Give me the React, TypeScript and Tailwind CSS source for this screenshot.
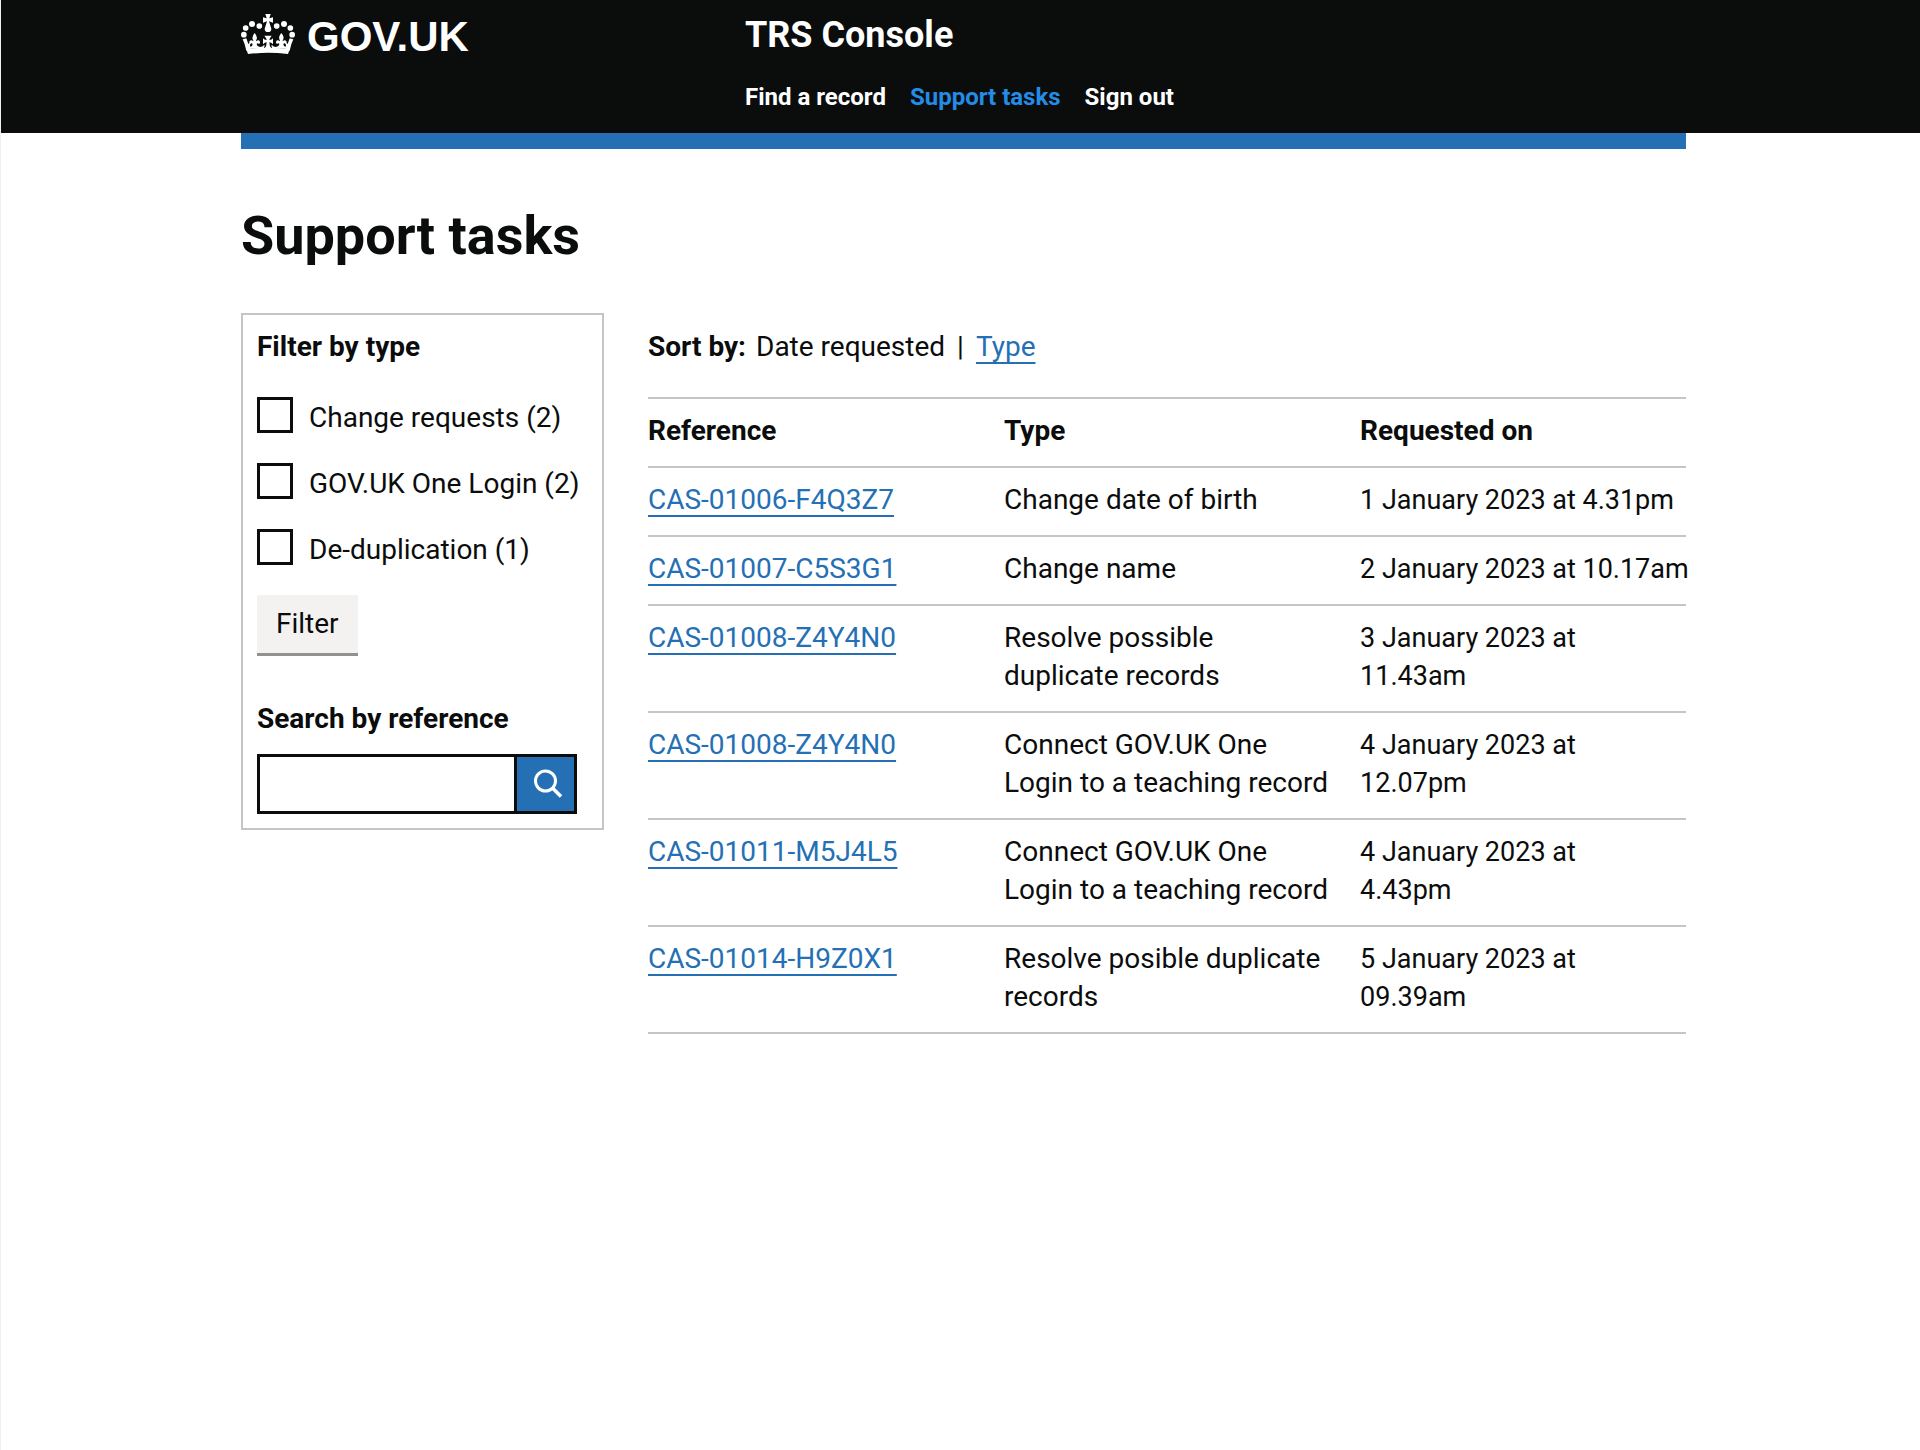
type Task = { reference: string; type: string[]; requestedOn: string[] }

const tasks: Task[] = [
  { reference: 'CAS-01006-F4Q3Z7', type: ['Change date of birth'], requestedOn: ['1 January 2023 at 4.31pm'] },
  { reference: 'CAS-01007-C5S3G1', type: ['Change name'], requestedOn: ['2 January 2023 at 10.17am'] },
  { reference: 'CAS-01008-Z4Y4N0', type: ['Resolve possible', 'duplicate records'], requestedOn: ['3 January 2023 at', '11.43am'] },
  { reference: 'CAS-01008-Z4Y4N0', type: ['Connect GOV.UK One', 'Login to a teaching record'], requestedOn: ['4 January 2023 at', '12.07pm'] },
  { reference: 'CAS-01011-M5J4L5', type: ['Connect GOV.UK One', 'Login to a teaching record'], requestedOn: ['4 January 2023 at', '4.43pm'] },
  { reference: 'CAS-01014-H9Z0X1', type: ['Resolve posible duplicate', 'records'], requestedOn: ['5 January 2023 at', '09.39am'] },
]

const filters = [
  { id: 'change-requests', label: 'Change requests (2)' },
  { id: 'one-login', label: 'GOV.UK One Login (2)' },
  { id: 'de-duplication', label: 'De-duplication (1)' },
]

const linkClass = 'text-[#2570b4] underline decoration-2 underline-offset-[6px] [text-decoration-skip-ink:none]'

function Crown() {
  return (
    <svg viewBox="0 0 162 120" className="h-10 w-[54px] shrink-0" fill="currentColor" aria-hidden="true">
      <circle cx="8.5" cy="62" r="8.5" />
      <circle cx="14" cy="42" r="8.5" />
      <circle cx="33" cy="30" r="9" />
      <circle cx="55" cy="36" r="8.5" />
      <circle cx="107" cy="36" r="8.5" />
      <circle cx="129" cy="30" r="9" />
      <circle cx="148" cy="42" r="8.5" />
      <circle cx="153.5" cy="62" r="8.5" />
      {/* orb cross and pendant pearl */}
      <path d="M73 0H89L85 13L96 10V26L84 22L91 44A10 10 0 1 1 71 44L78 22L66 26V10L77 13Z" />
      {/* band */}
      <path d="M21 120Q81 113 141 120L146 106Q114 101 81 101Q48 101 16 106Z" />
      {/* outer leaves */}
      <path d="M5 76L16 73L22 90L28 85L27 98L31 108L16 110Q12 90 5 76Z" />
      <path d="M157 76L146 73L140 90L134 85L135 98L131 108L146 110Q150 90 157 76Z" />
      {/* side fleurs */}
      <path d="M41 57Q50 67 47 76Q44 81 45 82Q53 75 57 83Q58 87 54 90Q48 85 47 91Q48 97 57 99Q65 99 70 92Q72 99 67 104H23L26 98Q34 98 35 92Q33 85 28 90Q23 87 26 81Q31 76 37 82Q38 80 35 76Q32 67 41 57Z" />
      <path d="M121 57Q112 67 115 76Q118 81 117 82Q109 75 105 83Q104 87 108 90Q114 85 115 91Q114 97 105 99Q97 99 92 92Q90 99 95 104H139L136 98Q128 98 127 92Q129 85 134 90Q139 87 136 81Q131 76 125 82Q124 80 127 76Q130 67 121 57Z" />
      {/* centre cross */}
      <path d="M70 65H92Q86 72 85 78Q91 79 96 73V91Q91 85 85 85Q85 98 91 103H71Q77 98 77 85Q71 85 66 91V73Q71 79 77 78Q76 72 70 65Z" />
    </svg>
  )
}

function Lines({ text }: { text: string[] }) {
  return (
    <>
      {text.map((line) => (
        <span key={line} className="block whitespace-nowrap">{line}</span>
      ))}
    </>
  )
}

function Header() {
  return (
    <header className="bg-[#0b0c0c] pl-[6px] text-white">
      <div className="mx-auto grid max-w-[1445px] grid-cols-[504px_1fr] pt-[11px] pb-[21px]">
        <a href="#home" className="flex items-start gap-3 self-start pt-[3px]">
          <Crown />
          <span className="font-['Liberation_Sans',sans-serif] text-[42px] leading-[46px] font-bold">GOV.UK</span>
        </a>
        <div>
          <a href="#console" className="text-4xl leading-[48px] font-bold">TRS Console</a>
          <nav className="mt-[23px] flex gap-6 text-2xl leading-[30px] font-bold">
            <a href="#find">Find a record</a>
            <a href="#tasks" aria-current="page" className="text-[#238ce6]">Support tasks</a>
            <a href="#sign-out">Sign out</a>
          </nav>
        </div>
      </div>
    </header>
  )
}

function FilterPanel() {
  return (
    <aside className="self-start border-2 border-[#c3c5c7] px-[14px] pt-[13px] pb-[14px]">
      <form onSubmit={(e) => e.preventDefault()}>
        <fieldset>
          <legend className="font-bold">Filter by type</legend>
          <div className="mt-[31px] flex flex-col gap-[30px]">
            {filters.map((f) => (
              <div key={f.id} className="flex h-9 items-start gap-4">
                <input
                  id={f.id}
                  type="checkbox"
                  className="size-9 shrink-0 appearance-none border-3 border-[#0b0c0c] bg-white checked:bg-[#0b0c0c]"
                />
                <label htmlFor={f.id} className="pt-0.5 whitespace-nowrap">{f.label}</label>
              </div>
            ))}
          </div>
        </fieldset>
        <button type="submit" className="mt-[30px] h-[61px] border-b-3 border-[#929191] bg-[#f3f2f1] px-[19px]">Filter</button>
      </form>
      <form onSubmit={(e) => e.preventDefault()} className="mt-11">
        <label htmlFor="reference" className="block font-bold">Search by reference</label>
        <div className="mt-4 flex h-[60px] w-[320px] max-w-full border-3 border-[#0b0c0c]">
          <input id="reference" type="text" className="min-w-0 flex-1 border-r-3 border-[#0b0c0c] px-2 outline-none" />
          <button type="submit" aria-label="Search" className="flex w-[57px] items-center justify-center bg-[#2570b4] pl-1 text-white">
            <svg viewBox="0 0 30 30" className="size-[30px]" fill="none" stroke="currentColor" strokeWidth="3" aria-hidden="true">
              <circle cx="12.5" cy="12" r="10" />
              <path d="M19.5 19L28 27.5" strokeWidth="3.6" />
            </svg>
          </button>
        </div>
      </form>
    </aside>
  )
}

function TaskTable() {
  return (
    <table className="mt-[31px] w-full table-fixed border-collapse text-left">
      <thead>
        <tr className="border-y-2 border-[#c3c5c7]">
          <th scope="col" className="w-[34.3%] pt-[13px] pb-4 font-bold">Reference</th>
          <th scope="col" className="w-[34.3%] pt-[13px] pb-4 font-bold">Type</th>
          <th scope="col" className="pt-[13px] pb-4 font-bold">Requested on</th>
        </tr>
      </thead>
      <tbody>
        {tasks.map((task, i) => (
          <tr key={i} className="border-b-2 border-[#c3c5c7] align-top">
            <td className="pt-[13px] pb-4"><a href={`#${task.reference}`} className={linkClass}>{task.reference}</a></td>
            <td className="pt-[13px] pb-4"><Lines text={task.type} /></td>
            <td className="pt-[13px] pb-4 text-[27px]"><Lines text={task.requestedOn} /></td>
          </tr>
        ))}
      </tbody>
    </table>
  )
}

export default function App() {
  return (
    <div className="min-h-screen border-l border-[#f0f0f0] bg-white font-['Roboto',sans-serif] text-[28px] leading-[38px] text-[#0b0c0c]">
      <Header />
      <div className="pl-[6px]">
        <div className="mx-auto max-w-[1445px]">
          <div className="h-4 bg-[#2570b4]" />
          <main className="pt-[57px]">
            <h1 className="text-[54px] leading-[60px] font-bold">Support tasks</h1>
            <div className="mt-[47px] grid grid-cols-[363px_1fr] gap-11">
              <FilterPanel />
              <section className="pt-[15px]">
                <p className="flex">
                  <strong>Sort by:</strong>
                  <span className="ml-2.5">Date requested</span>
                  <span className="mx-3">|</span>
                  <a href="#sort-type" className={linkClass}>Type</a>
                </p>
                <TaskTable />
              </section>
            </div>
          </main>
        </div>
      </div>
    </div>
  )
}
